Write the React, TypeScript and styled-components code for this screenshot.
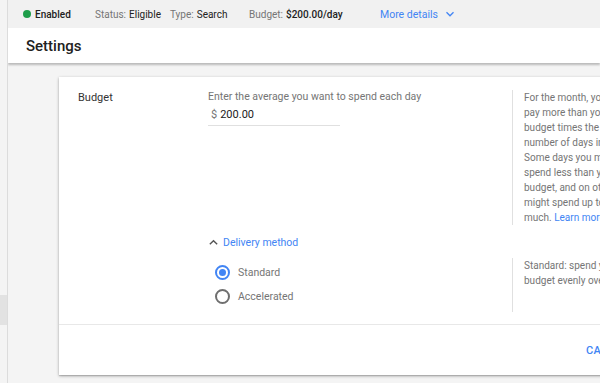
import React from "react";
import styled, { createGlobalStyle } from "styled-components";

const Global = createGlobalStyle`
  html, body { margin: 0; padding: 0; background: #f4f4f4; }
  body { font-family: Roboto, "Liberation Sans", Arial, sans-serif; }
  * { box-sizing: border-box; }
`;

const BLUE = "#4285f4";

const Page = styled.div`
  display: flex;
  width: 600px;
  height: 383px;
  overflow: hidden;
  background: #f4f4f4;
`;

const SideRail = styled.div`
  flex: 0 0 8px;
  border-right: 1px solid #dcdcdc;
  background: #f4f4f4;
  display: flex;
  flex-direction: column;
`;

const RailBlock = styled.div`
  margin-top: 295px;
  height: 30px;
  background: #e2e2e2;
`;

const Main = styled.div`
  flex: 1;
  min-width: 0;
  display: flex;
  flex-direction: column;
  overflow: hidden;
`;

const StatusBar = styled.div`
  height: 28px;
  flex: 0 0 28px;
  background: #f1f1f1;
  display: flex;
  align-items: center;
  padding-left: 15px;
  font-size: 10px;
  color: #212121;
  white-space: nowrap;
`;

const StatusItem = styled.div<{ $w: number }>`
  flex: 0 0 ${(p) => p.$w}px;
  display: flex;
  align-items: center;
`;

const Dot = styled.span`
  width: 8px;
  height: 8px;
  border-radius: 50%;
  background: #1e9e4a;
  margin-right: 4px;
`;

const Key = styled.span`
  color: #757575;
  margin-right: 3px;
`;

const Value = styled.span<{ $bold?: boolean }>`
  color: #212121;
  font-weight: ${(p) => (p.$bold ? 500 : 400)};
`;

const MoreLink = styled.a`
  color: ${BLUE};
  display: flex;
  align-items: center;
  gap: 6px;
  font-size: 10.5px;
`;

const Header = styled.div`
  height: 35px;
  flex: 0 0 35px;
  background: #fff;
  display: flex;
  align-items: center;
  padding-left: 18px;
  font-size: 15px;
  font-weight: 500;
  color: #212121;
  box-shadow: 0 2px 2px rgba(0, 0, 0, 0.24);
  position: relative;
  z-index: 1;
`;

const Content = styled.div`
  padding: 14px 0 0 51px;
`;

const Card = styled.div`
  width: 700px;
  background: #fff;
  box-shadow: 0 1px 3px rgba(0, 0, 0, 0.3), 0 1px 1px rgba(0, 0, 0, 0.12);
  font-size: 10.5px;
  color: #212121;
`;

const Section = styled.div`
  display: grid;
  grid-template-columns: 130px 304px 1fr;
  padding: 13px 0 0 19px;
`;

const Label = styled.div`
  font-size: 11px;
  line-height: 15px;
  color: #333;
`;

const Field = styled.div`
  display: flex;
  flex-direction: column;
`;

const Hint = styled.div`
  line-height: 13px;
  color: #757575;
`;

const InputRow = styled.div`
  width: 132px;
  height: 23px;
  display: flex;
  align-items: center;
  padding-left: 3px;
  border-bottom: 1px solid #e0e0e0;
  font-size: 11px;
`;

const Currency = styled.span`
  color: #757575;
  margin-right: 3px;
`;

const Help = styled.div<{ $h: number }>`
  height: ${(p) => p.$h}px;
  border-left: 1px solid #e0e0e0;
  padding-left: 11px;
  font-size: 10px;
  line-height: 15px;
  color: #757575;
  white-space: nowrap;
`;

const HelpLine = styled.span`
  display: block;
`;

const Link = styled.a`
  color: ${BLUE};
`;

const Delivery = styled.div`
  padding: 9px 0 0 149px;
`;

const Toggle = styled.div`
  display: flex;
  align-items: center;
  gap: 4px;
  height: 16px;
  color: ${BLUE};
  font-size: 10.5px;
`;

const DeliveryBody = styled.div`
  display: grid;
  grid-template-columns: 304px 1fr;
  margin-top: 8px;
  padding-bottom: 12px;
`;

const Radios = styled.div`
  display: flex;
  flex-direction: column;
  padding: 2px 0 0 7px;
`;

const RadioRow = styled.label`
  display: flex;
  align-items: center;
  height: 24px;
  gap: 8px;
  color: #757575;
  font-size: 10.5px;
`;

const Ring = styled.span<{ $on?: boolean }>`
  width: 15px;
  height: 15px;
  border-radius: 50%;
  border: 2px solid ${(p) => (p.$on ? BLUE : "#6f6f6f")};
  display: flex;
  align-items: center;
  justify-content: center;
  &::after {
    content: "";
    width: 7px;
    height: 7px;
    border-radius: 50%;
    background: ${(p) => (p.$on ? BLUE : "transparent")};
  }
`;

const Footer = styled.div`
  height: 51px;
  border-top: 1px solid #e8e8e8;
  display: flex;
  align-items: center;
  gap: 20px;
  padding-left: 527px;
`;

const TextButton = styled.button`
  border: 0;
  background: none;
  padding: 0;
  font-family: inherit;
  font-size: 11px;
  font-weight: 500;
  letter-spacing: 0.2px;
  color: ${BLUE};
  text-transform: uppercase;
`;

const ChevronDown = () => (
  <svg width="12" height="12" viewBox="0 0 24 24" fill="none" stroke={BLUE} strokeWidth="2.6">
    <path d="M5 8.5l7 7 7-7" />
  </svg>
);

const ChevronUp = () => (
  <svg width="11" height="11" viewBox="0 0 24 24" fill="none" stroke="#555" strokeWidth="3">
    <path d="M4 16l8-8 8 8" />
  </svg>
);

export default function App() {
  return (
    <>
      <Global />
      <Page>
        <SideRail>
          <RailBlock />
        </SideRail>
        <Main>
          <StatusBar>
            <StatusItem $w={72}>
              <Dot />
              <Value $bold>Enabled</Value>
            </StatusItem>
            <StatusItem $w={75}>
              <Key>Status:</Key>
              <Value>Eligible</Value>
            </StatusItem>
            <StatusItem $w={79}>
              <Key>Type:</Key>
              <Value>Search</Value>
            </StatusItem>
            <StatusItem $w={131}>
              <Key>Budget:</Key>
              <Value $bold>$200.00/day</Value>
            </StatusItem>
            <MoreLink>
              More details <ChevronDown />
            </MoreLink>
          </StatusBar>
          <Header>Settings</Header>
          <Content>
            <Card>
              <Section>
                <Label>Budget</Label>
                <Field>
                  <Hint>Enter the average you want to spend each day</Hint>
                  <InputRow>
                    <Currency>$</Currency>200.00
                  </InputRow>
                </Field>
                <Help $h={135}>
                  <HelpLine>For the month, you won't</HelpLine>
                  <HelpLine>pay more than your daily</HelpLine>
                  <HelpLine>budget times the average</HelpLine>
                  <HelpLine>number of days in a month.</HelpLine>
                  <HelpLine>Some days you might</HelpLine>
                  <HelpLine>spend less than your daily</HelpLine>
                  <HelpLine>budget, and on others you</HelpLine>
                  <HelpLine>might spend up to twice as</HelpLine>
                  <HelpLine>
                    much. <Link>Learn more</Link>
                  </HelpLine>
                </Help>
              </Section>
              <Delivery>
                <Toggle>
                  <ChevronUp />
                  Delivery method
                </Toggle>
                <DeliveryBody>
                  <Radios>
                    <RadioRow>
                      <Ring $on />
                      Standard
                    </RadioRow>
                    <RadioRow>
                      <Ring />
                      Accelerated
                    </RadioRow>
                  </Radios>
                  <Help $h={54}>
                    <HelpLine>Standard: spend your</HelpLine>
                    <HelpLine>budget evenly over time</HelpLine>
                  </Help>
                </DeliveryBody>
              </Delivery>
              <Footer>
                <TextButton>Cancel</TextButton>
                <TextButton>Save</TextButton>
              </Footer>
            </Card>
          </Content>
        </Main>
      </Page>
    </>
  );
}
